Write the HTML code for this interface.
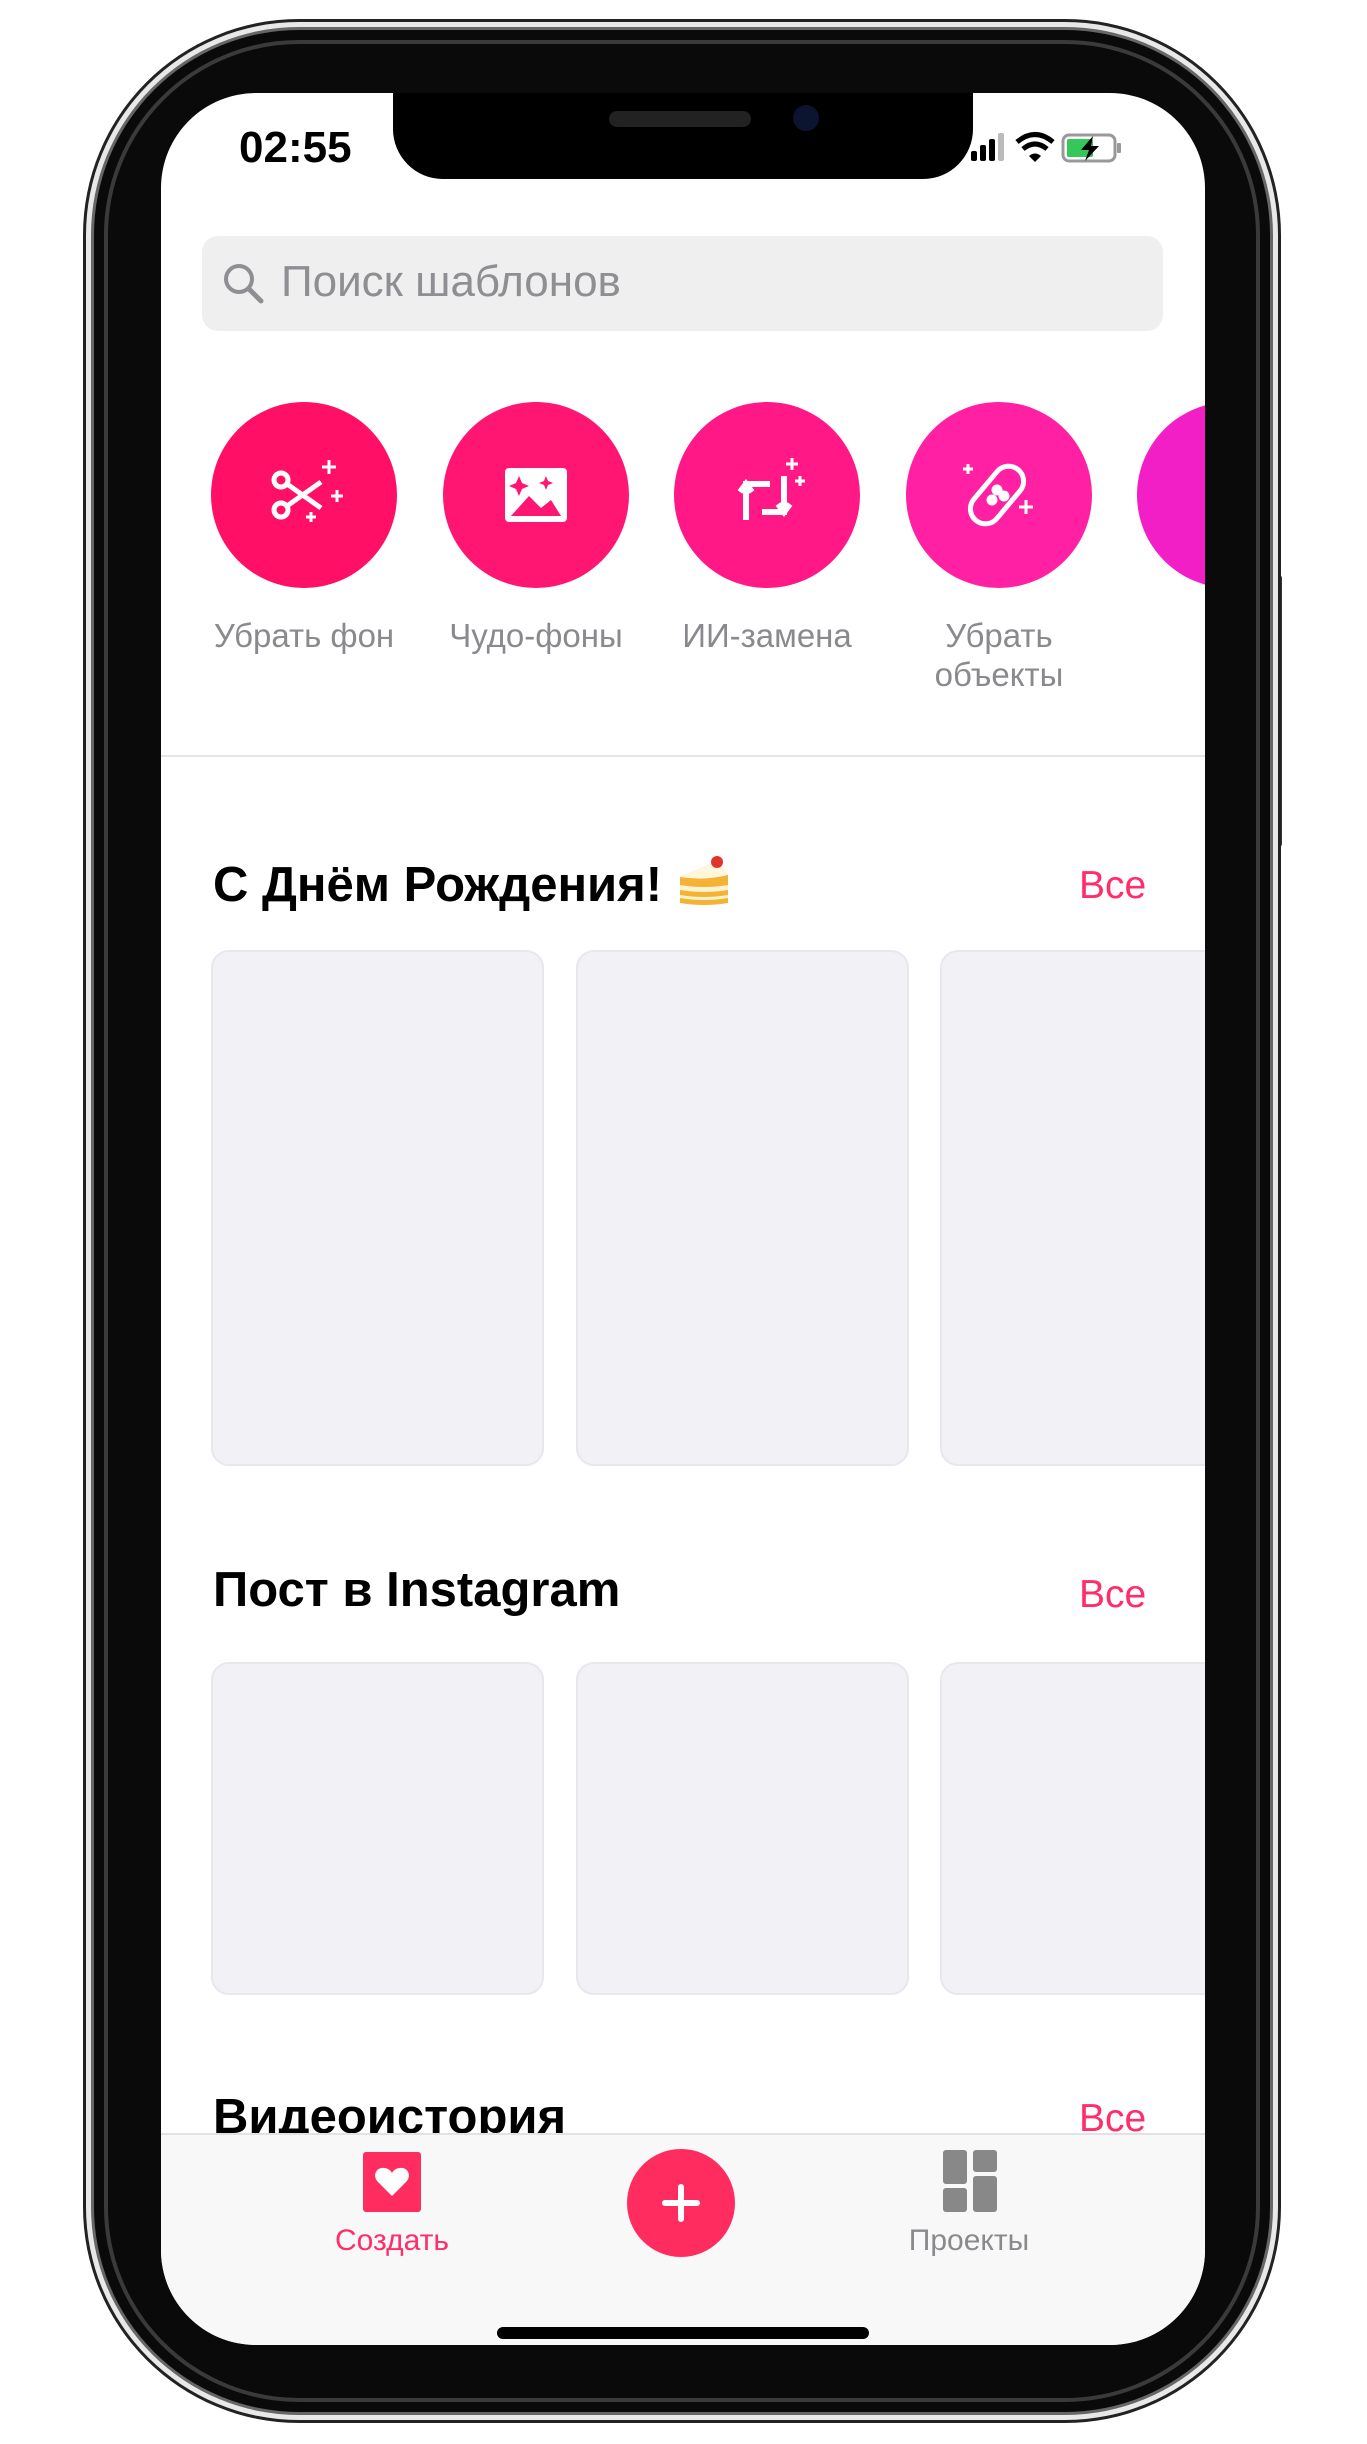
<!DOCTYPE html>
<html><head><meta charset="utf-8"><style>
*{margin:0;padding:0;box-sizing:border-box}
body{width:1367px;height:2444px;background:#fff;position:relative;overflow:hidden;font-family:"Liberation Sans","DejaVu Sans",sans-serif}
.abs{position:absolute}
.phone{left:94px;top:30px;width:1176px;height:2382px;border-radius:205px;background:#0a0a0a;box-shadow:0 0 0 3px #666,0 0 0 8px #e8e8e8,0 0 0 11px #222}
.phone2{left:104px;top:40px;width:1156px;height:2362px;border-radius:195px;border:4px solid #3a3a3a}
.screen{left:161px;top:93px;width:1044px;height:2252px;border-radius:95px;background:#fff;overflow:hidden}
.btn{background:#333;width:8px;border-radius:3px}
.circ{width:186px;height:186px;border-radius:50%;top:309px;display:flex;align-items:center;justify-content:center}
.lbl{top:523px;width:240px;text-align:center;font-size:33px;color:#8a8a8e;line-height:39px}
.h{font-size:49px;font-weight:bold;color:#000}
.all{font-size:39px;color:#ff2d6a}
.card{background:#f1f1f6;border:2px solid #e7e7ec;border-radius:18px}
</style></head><body>
<div class="abs btn" style="left:84px;top:350px;height:86px"></div>
<div class="abs btn" style="left:84px;top:520px;height:164px"></div>
<div class="abs btn" style="left:84px;top:738px;height:164px"></div>
<div class="abs btn" style="left:1274px;top:575px;height:272px"></div>
<div class="abs phone"></div>
<div class="abs phone2"></div>
<div class="abs screen">
 <div class="abs" style="left:232px;top:-10px;width:580px;height:96px;background:#000;border-radius:0 0 50px 50px"></div>
 <div class="abs" style="left:448px;top:18px;width:142px;height:16px;background:#222;border-radius:8px"></div>
 <div class="abs" style="left:632px;top:12px;width:26px;height:26px;background:#0b1530;border-radius:50%"></div>
 <div class="abs" style="left:78px;top:30px;font-size:44px;font-weight:bold;color:#000">02:55</div>
 <svg class="abs" style="left:810px;top:36px" width="180" height="40" viewBox="0 0 180 40">
  <rect x="0" y="22" width="6" height="10" rx="2" fill="#000"/><rect x="9" y="16" width="6" height="16" rx="2" fill="#000"/><rect x="18" y="10" width="6" height="22" rx="2" fill="#000"/><rect x="27" y="4" width="6" height="28" rx="2" fill="#bbb"/>
  <path d="M46 13 Q64 -2 82 13" stroke="#000" stroke-width="5" fill="none"/><path d="M52 20 Q64 10 76 20" stroke="#000" stroke-width="5" fill="none"/><path d="M58 27 L64 33 L70 27 Q64 22 58 27Z" fill="#000"/>
  <rect x="92" y="6" width="52" height="26" rx="6" fill="none" stroke="#999" stroke-width="3"/><rect x="96" y="10" width="26" height="18" rx="2" fill="#34c759"/><rect x="146" y="14" width="4" height="10" rx="1" fill="#999"/>
  <path d="M122 7 L110 21 L118 21 L114 32 L128 17 L120 17 Z" fill="#000"/>
 </svg>
 <div class="abs" style="left:41px;top:143px;width:961px;height:95px;border-radius:16px;background:#efefef"></div>
 <svg class="abs" style="left:60px;top:168px" width="46" height="46" viewBox="0 0 46 46"><circle cx="18" cy="18" r="13" stroke="#8e8e93" stroke-width="4" fill="none"/><path d="M28 28 L40 40" stroke="#8e8e93" stroke-width="5" stroke-linecap="round"/></svg>
 <div class="abs" style="left:120px;top:164px;font-size:44px;color:#8e8e93">Поиск шаблонов</div>

 <div class="abs circ" style="left:50px;background:#ff0f66">
  <svg width="90" height="90" viewBox="0 0 90 90" fill="none" stroke="#fff" stroke-width="5"><circle cx="22" cy="30" r="7"/><circle cx="22" cy="60" r="7"/><path d="M28 34 L62 58 M28 56 L62 32"/><path d="M70 10 v14 M63 17 h14 M78 40 v12 M72 46 h12 M52 62 v10 M47 67 h10" stroke-width="3"/></svg></div>
 <div class="abs circ" style="left:282px;background:#ff1673">
  <svg width="90" height="90" viewBox="0 0 90 90"><rect x="14" y="18" width="62" height="54" rx="4" fill="#fff"/><path d="M20 66 L38 46 L50 58 L60 50 L70 66Z" fill="#ff1673"/><path d="M28 26 l3 7 l7 3 l-7 3 l-3 7 l-3 -7 l-7 -3 l7 -3Z M55 26 l2 5 l5 2 l-5 2 l-2 5 l-2 -5 l-5 -2 l5 -2Z" fill="#ff1673"/></svg></div>
 <div class="abs circ" style="left:513px;background:#ff1886">
  <svg width="90" height="90" viewBox="0 0 90 90" fill="none" stroke="#fff" stroke-width="6"><path d="M24 70 V34 H48 M18 42 L24 34 L30 42"/><path d="M62 26 V62 H40 M56 54 L62 62 L68 54"/><path d="M70 8 v12 M64 14 h12 M78 26 v10 M73 31 h10" stroke-width="3"/></svg></div>
 <div class="abs circ" style="left:745px;background:#ff20a3">
  <svg width="90" height="90" viewBox="0 0 90 90" fill="none" stroke="#fff" stroke-width="5"><rect x="28" y="12" width="30" height="66" rx="15" transform="rotate(40 43 45)"/><circle cx="43" cy="40" r="3" fill="#fff"/><circle cx="50" cy="46" r="3" fill="#fff"/><circle cx="38" cy="50" r="3" fill="#fff"/><path d="M14 14 v10 M9 19 h10 M72 50 v14 M65 57 h14" stroke-width="3"/></svg></div>
 <div class="abs circ" style="left:976px;background:#f21ec6"></div>

 <div class="abs lbl" style="left:23px">Убрать фон</div>
 <div class="abs lbl" style="left:255px">Чудо-фоны</div>
 <div class="abs lbl" style="left:486px">ИИ-замена</div>
 <div class="abs lbl" style="left:718px">Убрать<br>объекты</div>
 <div class="abs lbl" style="left:950px">Му<br>М</div>

 <div class="abs" style="left:0;top:662px;width:1044px;height:2px;background:#e5e5e5"></div>

 <div class="abs h" style="left:52px;top:760px">С Днём Рождения!
  <svg style="vertical-align:-8px" width="56" height="56" viewBox="0 0 56 56"><path d="M4 24 L42 8 L52 22 L52 50 Q28 54 4 50Z" fill="#f5b235"/><path d="M4 32 Q28 36 52 32 L52 37 Q28 41 4 37Z" fill="#fff2cf"/><path d="M4 42 Q28 46 52 42 L52 45 Q28 49 4 45Z" fill="#fff2cf"/><path d="M4 24 L42 8 L52 22 Q28 28 4 24Z" fill="#fff6dc"/><circle cx="41" cy="9" r="6" fill="#e0352b"/></svg></div>
 <div class="abs all" style="left:918px;top:771px">Все</div>
 <div class="abs card" style="left:50px;top:857px;width:333px;height:516px"></div>
 <div class="abs card" style="left:415px;top:857px;width:333px;height:516px"></div>
 <div class="abs card" style="left:779px;top:857px;width:333px;height:516px"></div>

 <div class="abs h" style="left:52px;top:1469px">Пост в Instagram</div>
 <div class="abs all" style="left:918px;top:1480px">Все</div>
 <div class="abs card" style="left:50px;top:1569px;width:333px;height:333px"></div>
 <div class="abs card" style="left:415px;top:1569px;width:333px;height:333px"></div>
 <div class="abs card" style="left:779px;top:1569px;width:333px;height:333px"></div>

 <div class="abs h" style="left:52px;top:1996px">Видеоистория</div>
 <div class="abs all" style="left:918px;top:2004px">Все</div>

 <div class="abs" style="left:0;top:2040px;width:1044px;height:220px;background:#f8f8f8;border-top:2px solid #e2e2e2"></div>
 <svg class="abs" style="left:202px;top:2059px" width="58" height="60" viewBox="0 0 58 60"><rect width="58" height="60" rx="3" fill="#ff2d5f"/><path d="M29 44 L15 30 C9 24 13 15 21 16 C25 16 28 19 29 21 C30 19 33 16 37 16 C45 15 49 24 43 30Z" fill="#fff"/></svg>
 <div class="abs" style="left:161px;top:2131px;width:140px;text-align:center;font-size:30px;color:#ff2d6a">Создать</div>
 <div class="abs" style="left:466px;top:2056px;width:108px;height:108px;border-radius:50%;background:#ff2d5f"></div>
 <div class="abs" style="left:501px;top:2107px;width:38px;height:6px;background:#fff;border-radius:3px"></div>
 <div class="abs" style="left:517px;top:2091px;width:6px;height:38px;background:#fff;border-radius:3px"></div>
 <svg class="abs" style="left:782px;top:2057px" width="54" height="62" viewBox="0 0 54 62" fill="#888"><rect x="0" y="0" width="24" height="34" rx="3"/><rect x="30" y="0" width="24" height="22" rx="3"/><rect x="0" y="38" width="24" height="24" rx="3"/><rect x="30" y="26" width="24" height="36" rx="3"/></svg>
 <div class="abs" style="left:733px;top:2131px;width:150px;text-align:center;font-size:30px;color:#8a8a8e">Проекты</div>
 <div class="abs" style="left:336px;top:2234px;width:372px;height:12px;border-radius:6px;background:#000"></div>
</div>
</body></html>
